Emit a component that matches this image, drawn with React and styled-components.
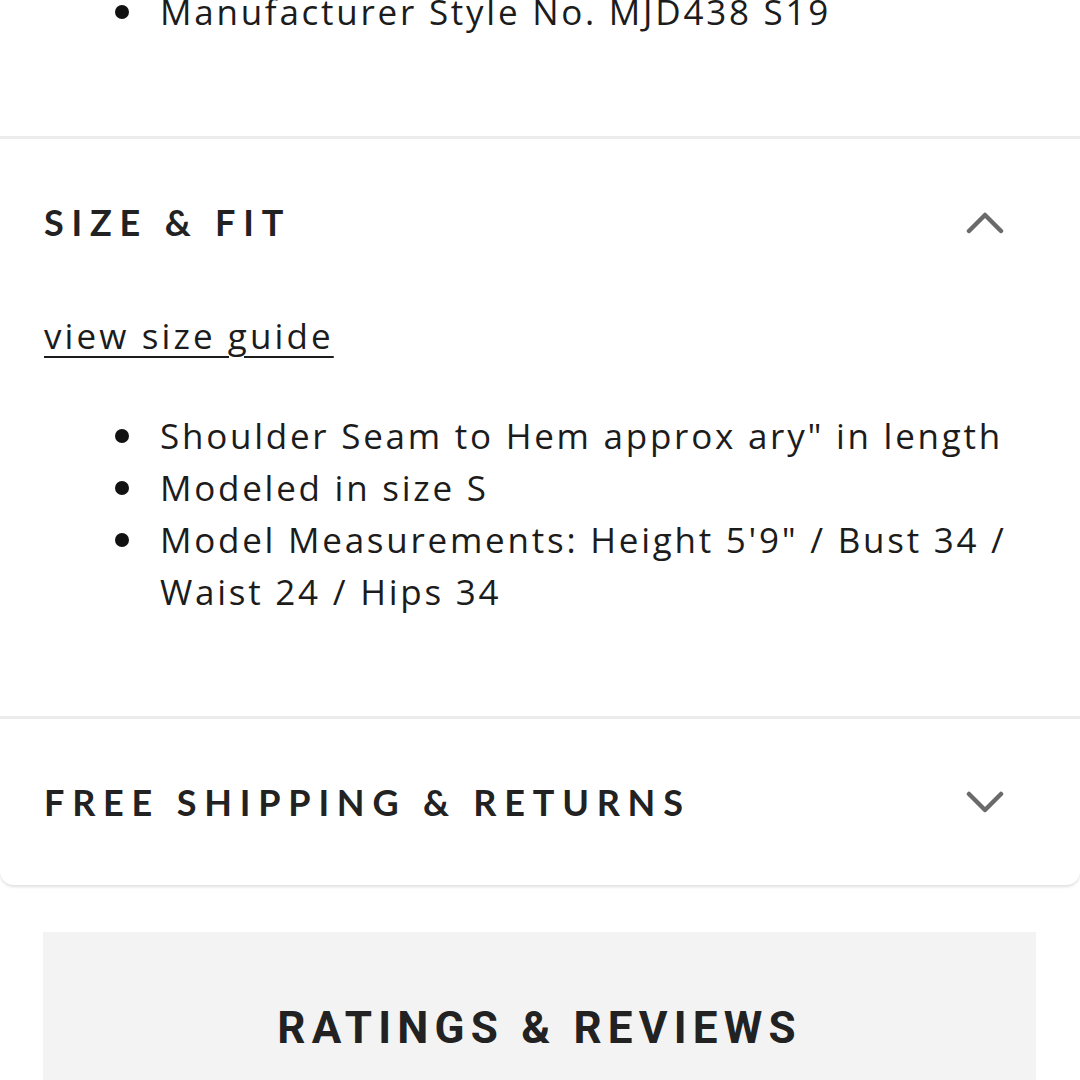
import React from 'react'
import styled, { createGlobalStyle } from 'styled-components'

const GlobalStyle = createGlobalStyle`
    body {
        margin: 0;
        background: #fff;
        font-family: "Open Sans", "Liberation Sans", sans-serif;
        color: #1c1c1c;
    }
`

const Chevron = ({ up }) => (
    <svg width="38" height="24" viewBox="0 0 38 24">
        <path
            d={up ? 'M3 21 L19 5 L35 21' : 'M3 4 L19 20 L35 4'}
            fill="none"
            stroke="#6a6a6a"
            strokeWidth="4.5"
            strokeLinecap="round"
            strokeLinejoin="round"
        />
    </svg>
)

export default class App extends React.Component {
    render () {
        return (
            <Page>
                <GlobalStyle />
                <Accordion>
                    <Body top>
                        <Bullets>
                            <li>Manufacturer Style No. MJD438 S19</li>
                        </Bullets>
                    </Body>

                    {/* size & fit */}
                    <Section>
                        <Header>
                            <Title>SIZE &amp; FIT</Title>
                            <Chevron up />
                        </Header>
                        <Body>
                            <Guide href="#">view size guide</Guide>
                            <Bullets spaced>
                                <li>Shoulder Seam to Hem approx ary" in length</li>
                                <li>Modeled in size S</li>
                                <li>Model Measurements: Height 5'9" / Bust 34 / Waist 24 / Hips 34</li>
                            </Bullets>
                        </Body>
                    </Section>

                    {/* shipping */}
                    <Section>
                        <Header>
                            <Title>FREE SHIPPING &amp; RETURNS</Title>
                            <Chevron />
                        </Header>
                    </Section>
                </Accordion>

                <Reviews>
                    <h2>RATINGS &amp; REVIEWS</h2>
                </Reviews>
            </Page>
        )
    }
}

const Page = styled.div`
    width: 1080px;
    height: 1080px;
    overflow: hidden;
`

const Accordion = styled.div`
    border-radius: 0 0 14px 14px;
    box-shadow: 0 2px 3px rgba(0, 0, 0, 0.12);
`

const Section = styled.div`
    border-top: 3px solid #ececec;
`

const Header = styled.div`
    display: flex;
    align-items: center;
    justify-content: space-between;
    height: 166px;
    padding: 0 76px 0 44px;
`

const Title = styled.h3`
    margin: 0;
    font-family: "Lato", "Liberation Sans", sans-serif;
    font-weight: 700;
    font-size: 36px;
    letter-spacing: 7.8px;
    color: #222;
`

const Body = styled.div`
    padding: ${p => (p.top ? '0' : '5px')} 44px 98px;
    margin-top: ${p => (p.top ? '-14px' : '0')};
`

const Guide = styled.a`
    display: block;
    width: max-content;
    font-size: 35px;
    line-height: 52px;
    color: #1c1c1c;
    text-decoration: underline;
    text-underline-offset: 7px;
    text-decoration-thickness: 2px;
    letter-spacing: 3.1px;
`

const Bullets = styled.ul`
    margin: ${p => (p.spaced ? '48px' : '0')} 0 0;
    padding: 0 0 0 71px;
    list-style: none;
    font-size: 35px;
    line-height: 52px;
    letter-spacing: 2.75px;
    li {
        display: grid;
        grid-template-columns: 45px 1fr;
        align-items: start;
    }
    li::before {
        content: '';
        width: 14px;
        height: 14px;
        margin: 19px 0 0;
        border-radius: 50%;
        background: #111;
    }
`

const Reviews = styled.div`
    margin: 47px 44px 0 43px;
    height: 300px;
    background: #f3f3f3;
    h2 {
        margin: 0;
        padding-top: 70px;
        text-align: center;
        font-family: "Roboto", "Liberation Sans", sans-serif;
        font-weight: 700;
        font-size: 44px;
        letter-spacing: 6.2px;
        color: #222;
    }
`
